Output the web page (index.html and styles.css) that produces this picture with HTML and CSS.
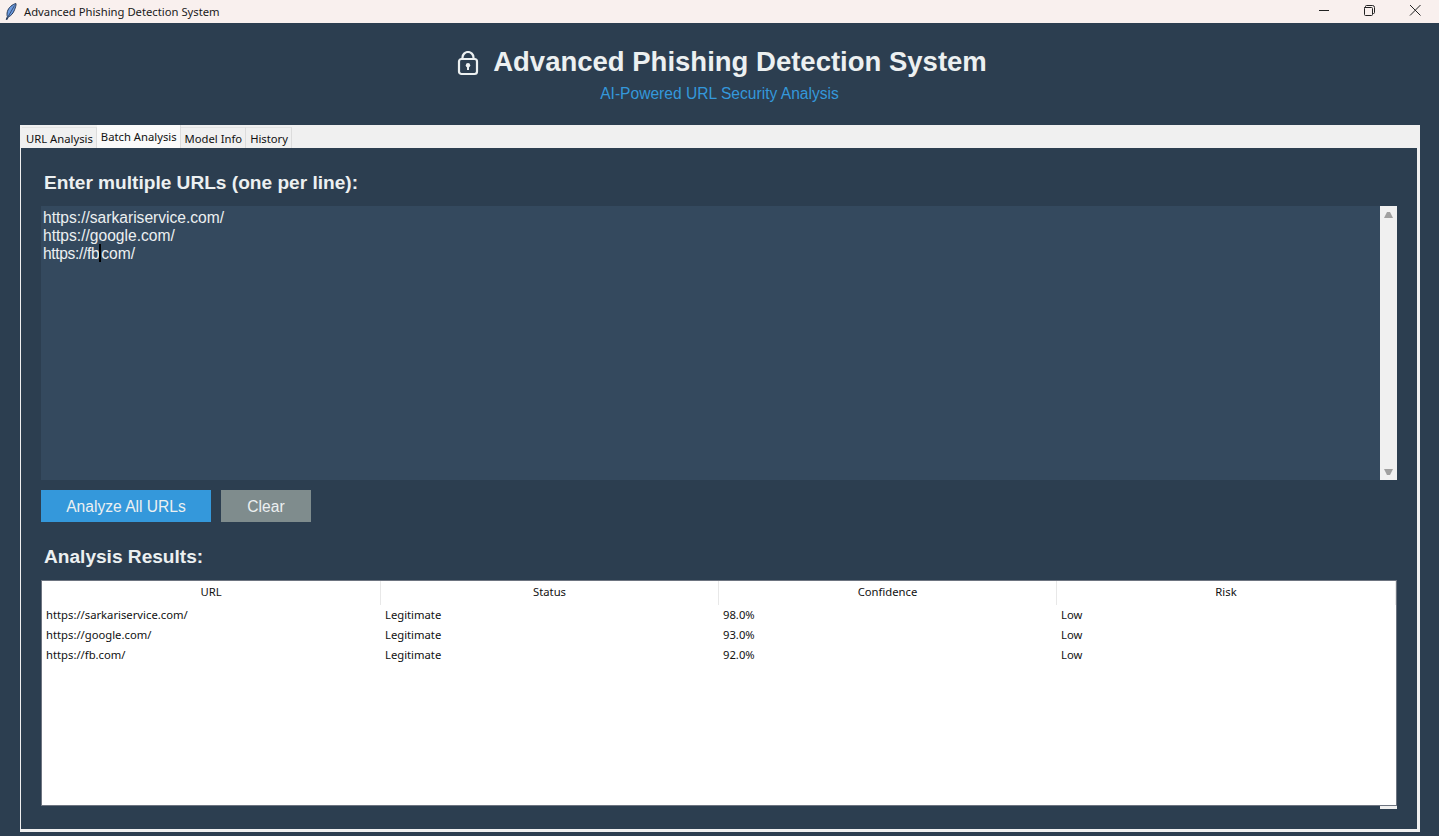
FILE: index.html
```html
<!DOCTYPE html>
<html lang="en">
<head>
<meta charset="utf-8">
<title>Advanced Phishing Detection System</title>
<link rel="stylesheet" href="styles.css">
</head>
<body>
<div class="titlebar">
  <svg class="feather" width="12" height="17" viewBox="0 0 12 17"><path d="M11 0.6C7.5 1.2 3.5 4.5 2.4 8.5 1.8 10.7 1.9 12.5 2.4 13.6L1.2 16.4 2.2 16.4 3.3 13.9C6 13 8.4 10 9.6 6.7 10.4 4.5 11.2 2.5 11 0.6Z" fill="#6d9be0" stroke="#1c2c48" stroke-width="0.9"/><path d="M9.5 2.5L3.2 13.5" stroke="#1c2c48" stroke-width="0.7"/></svg>
  <span class="window-title">Advanced Phishing Detection System</span>
  <div class="window-controls">
    <svg class="wc" width="46" height="23" viewBox="0 0 46 23"><path d="M19 10.5H29" stroke="#222" fill="none"/></svg>
    <svg class="wc" width="46" height="23" viewBox="0 0 46 23"><path d="M19.5 7.5V6.5Q19.5 5.5 20.5 5.5H26.5Q28.5 5.5 28.5 7.5V12.5Q28.5 13.5 27.5 13.5H26.5M18.5 7.5H25.5Q26.5 7.5 26.5 8.5V14.5Q26.5 15.5 25.5 15.5H19.5Q18.5 15.5 18.5 14.5V8.5Q18.5 7.5 19.5 7.5Z" stroke="#222" fill="none"/></svg>
    <svg class="wc" width="46" height="23" viewBox="0 0 46 23"><path d="M18 5L28.5 15.5M28.5 5L18 15.5" stroke="#222" fill="none"/></svg>
  </div>
</div>
<header class="header">
  <h1 class="app-title">
    <svg class="lock" width="22" height="25" viewBox="0 0 22 25"><path d="M5.5 8V6.5a5.5 5.5 0 0 1 11 0V8" fill="none" stroke="#ecf0f1" stroke-width="2.2"/><rect x="2" y="8" width="18" height="15" rx="2.5" fill="none" stroke="#ecf0f1" stroke-width="2.2"/><circle cx="11" cy="14.2" r="2.2" fill="#ecf0f1"/><rect x="10" y="14.5" width="2" height="4.5" fill="#ecf0f1"/></svg>
    <span>Advanced Phishing Detection System</span>
  </h1>
  <p class="subtitle">AI-Powered URL Security Analysis</p>
</header>
<main class="notebook">
  <nav class="tabs">
    <div class="tab">URL Analysis</div>
    <div class="tab selected">Batch Analysis</div>
    <div class="tab">Model Info</div>
    <div class="tab">History</div>
  </nav>
  <section class="pane">
    <h2 class="section-label">Enter multiple URLs (one per line):</h2>
    <div class="input-row">
      <div class="url-input">
        <div>https://sarkariservice.com/</div>
        <div>https://google.com/</div>
        <div><span class="tight">https://fb</span><span class="caret"></span>com/</div>
      </div>
      <div class="scrollbar">
        <span class="arrow up"></span>
        <span class="arrow down"></span>
      </div>
    </div>
    <div class="buttons">
      <button class="btn primary">Analyze All URLs</button>
      <button class="btn secondary">Clear</button>
    </div>
    <h2 class="section-label results-label">Analysis Results:</h2>
    <div class="table-wrap">
      <div class="table">
        <div class="row head">
          <div class="cell">URL</div><div class="cell">Status</div><div class="cell">Confidence</div><div class="cell">Risk</div>
        </div>
        <div class="row">
          <div class="cell">https://sarkariservice.com/</div><div class="cell">Legitimate</div><div class="cell">98.0%</div><div class="cell">Low</div>
        </div>
        <div class="row">
          <div class="cell">https://google.com/</div><div class="cell">Legitimate</div><div class="cell">93.0%</div><div class="cell">Low</div>
        </div>
        <div class="row">
          <div class="cell">https://fb.com/</div><div class="cell">Legitimate</div><div class="cell">92.0%</div><div class="cell">Low</div>
        </div>
      </div>
      <div class="table-scroll-stub"></div>
    </div>
  </section>
</main>
</body>
</html>
```
FILE: styles.css
```css
* { box-sizing: border-box; }
html, body { margin: 0; height: 100%; overflow: hidden; }
body {
  background: #2c3e50;
  font-family: "Noto Sans", "Open Sans", sans-serif;
  display: flex;
  flex-direction: column;
}
.titlebar {
  height: 23px;
  flex: none;
  background: #f9f0ee;
  display: flex;
  align-items: center;
  padding-left: 5px;
  font-size: 11.25px;
  color: #1a1a1a;
}
.feather { flex: none; }
.window-title { margin-left: 7px; }
.window-controls { margin-left: auto; margin-right: 1px; display: flex; }
.wc { display: block; }
.header { height: 102px; flex: none; text-align: center; padding-top: 23px; }
.app-title {
  margin: 0;
  display: flex;
  justify-content: center;
  align-items: center;
  gap: 14px;
  height: 32px;
  padding-left: 5px;
  font: bold 27.5px "Liberation Sans", Arial, sans-serif;
  color: #ecf0f1;
}
.lock { margin-top: 2px; }
.subtitle {
  margin: 7px 0 0;
  font: 15.6px/18px "Liberation Sans", Arial, sans-serif;
  color: #3498db;
}
.notebook { margin-left: 20px; width: 1400px; height: 707px; flex: none; display: flex; flex-direction: column; }
.tabs {
  height: 23px;
  flex: none;
  background: #f0f0f0;
  display: flex;
  align-items: flex-end;
  padding-left: 2px;
}
.tab {
  height: 21px;
  padding: 1px 3px 0 4px;
  font-size: 11.25px;
  line-height: 19px;
  color: #111;
  border-right: 1px solid #dcdcdc;
  border-top: 1px solid #e4e4e4;
  white-space: nowrap;
}
.tab.selected {
  height: 23px;
  padding-top: 2px;
  background: #fafafa;
  border-top: 0;
}
.pane {
  flex: 1;
  border-left: 1px solid #f0f0f0;
  border-right: 3px solid #f0f0f0;
  border-bottom: 3px solid #f0f0f0;
  padding: 0 20px 0 20px;
  display: flex;
  flex-direction: column;
}
.section-label {
  margin: 24px 0 0 3px;
  font: bold 19.1px/22px "Liberation Sans", Arial, sans-serif;
  color: #ecf0f1;
}
.input-row { display: flex; height: 274px; margin-top: 12px; flex: none; }
.url-input {
  flex: 1;
  background: #34495e;
  color: #ecf0f1;
  padding: 3px 2px;
  font: 15.6px/18px "Liberation Sans", Arial, sans-serif;
}
.tight { letter-spacing: -0.35px; }
.caret { position: relative; margin-right: 2px; }
.caret::after {
  content: "";
  position: absolute;
  left: 0;
  top: -1px;
  width: 1.5px;
  height: 18px;
  background: #000;
}
.scrollbar {
  width: 17px;
  background: #f0f0f0;
  position: relative;
}
.arrow {
  position: absolute;
  left: 4px;
  width: 9px;
  height: 6px;
  background: #a0a0a0;
}
.arrow.up { top: 6px; clip-path: polygon(33% 0, 67% 0, 100% 100%, 0 100%); }
.arrow.down { bottom: 5px; clip-path: polygon(0 0, 100% 0, 67% 100%, 33% 100%); }
.buttons { display: flex; gap: 10px; margin-top: 10px; flex: none; }
.btn {
  height: 32px;
  border: 0;
  padding: 2px 0 0;
  color: #ecf0f1;
  font: 15.6px "Liberation Sans", Arial, sans-serif;
}
.primary { width: 170px; background: #3498db; }
.secondary { width: 90px; background: #7f8c8d; }
.results-label { margin-top: 24px; }
.table-wrap { margin-top: 12px; position: relative; width: 1356px; height: 226px; flex: none; }
.table {
  height: 100%;
  background: #fff;
  border: 1px solid #6d7480;
  font-size: 11.25px;
  color: #111;
}
.row { display: grid; grid-template-columns: 339px 338px 338px 1fr; height: 20px; line-height: 20px; }
.row.head { height: 24px; line-height: 22px; text-align: center; }
.row.head .cell { border-right: 1px solid #e8e8e8; padding-left: 0; }
.cell { padding-left: 4px; white-space: nowrap; overflow: hidden; }
.table-scroll-stub {
  position: absolute;
  right: 0;
  bottom: -3px;
  width: 17px;
  height: 3px;
  background: #f0f0f0;
}
```
